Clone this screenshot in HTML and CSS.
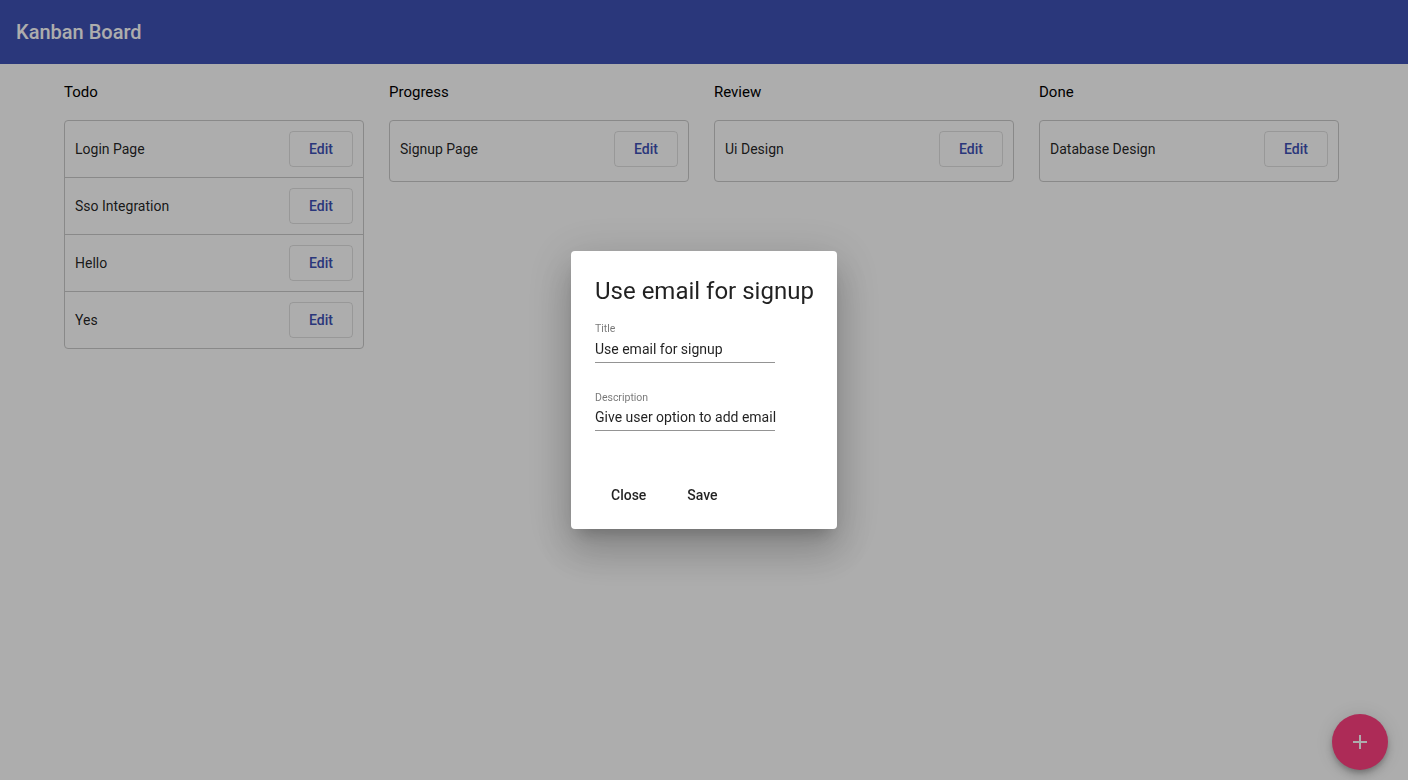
FILE: index.html
```html
<!DOCTYPE html>
<html>
<head>
<meta charset="utf-8">
<link rel="stylesheet" href="styles.css">
</head>
<body>
<header class="toolbar"><span class="toolbar-title">Kanban Board</span></header>
<main class="board">
  <section class="column">
    <h3 class="column-title">Todo</h3>
    <div class="card-list">
      <div class="card"><span class="card-text">Login Page</span><button class="edit-btn">Edit</button></div>
      <div class="card"><span class="card-text">Sso Integration</span><button class="edit-btn">Edit</button></div>
      <div class="card"><span class="card-text">Hello</span><button class="edit-btn">Edit</button></div>
      <div class="card"><span class="card-text">Yes</span><button class="edit-btn">Edit</button></div>
    </div>
  </section>
  <section class="column">
    <h3 class="column-title">Progress</h3>
    <div class="card-list">
      <div class="card"><span class="card-text">Signup Page</span><button class="edit-btn">Edit</button></div>
    </div>
  </section>
  <section class="column">
    <h3 class="column-title">Review</h3>
    <div class="card-list">
      <div class="card"><span class="card-text">Ui Design</span><button class="edit-btn">Edit</button></div>
    </div>
  </section>
  <section class="column">
    <h3 class="column-title">Done</h3>
    <div class="card-list">
      <div class="card"><span class="card-text">Database Design</span><button class="edit-btn">Edit</button></div>
    </div>
  </section>
</main>
<button class="fab" aria-label="Add">
  <svg viewBox="0 0 24 24" width="24" height="24"><path d="M19 13h-6v6h-2v-6H5v-2h6V5h2v6h6v2z" fill="#fff"/></svg>
</button>
<div class="backdrop">
  <div class="dialog">
    <h2 class="dialog-title">Use email for signup</h2>
    <div class="field">
      <label class="field-label">Title</label>
      <div class="field-input">Use email for signup</div>
    </div>
    <div class="field field-second">
      <label class="field-label">Description</label>
      <div class="field-input">Give user option to add email</div>
    </div>
    <div class="dialog-actions">
      <button class="text-btn">Close</button>
      <button class="text-btn">Save</button>
    </div>
  </div>
</div>
</body>
</html>
```

FILE: styles.css
```css
* { box-sizing: border-box; }
html, body { margin: 0; padding: 0; }
body {
  font-family: Roboto, "Helvetica Neue", sans-serif;
  background: #fff;
  color: rgba(0,0,0,.87);
  height: 780px;
  overflow: hidden;
}
.toolbar {
  height: 64px;
  background: #3f51b5;
  color: #fff;
  display: flex;
  align-items: center;
  padding: 0 16px;
}
.toolbar-title {
  font-size: 20px;
  font-weight: 500;
}
.board {
  display: flex;
  gap: 25px;
  padding: 18px 64px 0;
  align-items: flex-start;
}
.column { width: 300px; }
.column-title {
  margin: 0 0 18px;
  font-size: 15px;
  font-weight: 400;
  line-height: 20px;
  color: #000;
}
.card-list {
  border: 1px solid #cbcbcb;
  border-radius: 4px;
  background: #fff;
  min-height: 62px;
}
.card {
  display: flex;
  align-items: center;
  justify-content: space-between;
  padding: 10px;
  border-bottom: 1px solid #cbcbcb;
  height: 57px;
}
.card:last-child { border-bottom: none; height: 56px; }
.card-text {
  font-size: 14px;
  color: rgba(0,0,0,.87);
}
.edit-btn {
  font-family: inherit;
  font-size: 14px;
  font-weight: 500;
  color: #3f51b5;
  background: transparent;
  border: 1px solid rgba(0,0,0,.12);
  border-radius: 4px;
  width: 64px;
  height: 36px;
  padding: 0;
}
.fab {
  position: fixed;
  right: 20px;
  bottom: 10px;
  width: 56px;
  height: 56px;
  border-radius: 50%;
  border: none;
  background: #ff4081;
  display: flex;
  align-items: center;
  justify-content: center;
  padding: 0;
  box-shadow: 0 3px 5px -1px rgba(0,0,0,.2), 0 6px 10px 0 rgba(0,0,0,.14), 0 1px 18px 0 rgba(0,0,0,.12);
}
.backdrop {
  position: fixed;
  inset: 0;
  background: rgba(0,0,0,.32);
  display: flex;
  align-items: center;
  justify-content: center;
}
.dialog {
  width: 266px;
  height: 278px;
  background: #fff;
  border-radius: 4px;
  padding: 24px;
  box-shadow: 0 11px 15px -7px rgba(0,0,0,.2), 0 24px 38px 3px rgba(0,0,0,.14), 0 9px 46px 8px rgba(0,0,0,.12);
  display: flex;
  flex-direction: column;
}
.dialog-title {
  margin: 0 0 15px;
  font-size: 24px;
  font-weight: 400;
  line-height: 32px;
  color: rgba(0,0,0,.87);
  white-space: nowrap;
}
.field {
  width: 180px;
  display: flex;
  flex-direction: column;
  border-bottom: 1px solid rgba(0,0,0,.42);
  padding-bottom: 4px;
}
.field-second { margin-top: 28px; }
.field-label {
  font-size: 10.5px;
  line-height: 14px;
  color: rgba(0,0,0,.54);
}
.field-input {
  margin-top: 4px;
  font-size: 14px;
  line-height: 18px;
  color: rgba(0,0,0,.87);
  white-space: nowrap;
}
.field-second .field-input { margin-top: 3px; }
.dialog-actions {
  margin-top: auto;
  display: flex;
  gap: 8px;
  margin-bottom: -8px;
}
.text-btn {
  font-family: inherit;
  font-size: 14px;
  font-weight: 500;
  color: rgba(0,0,0,.87);
  background: transparent;
  border: none;
  min-width: 64px;
  height: 36px;
  padding: 0 16px;
}
```
